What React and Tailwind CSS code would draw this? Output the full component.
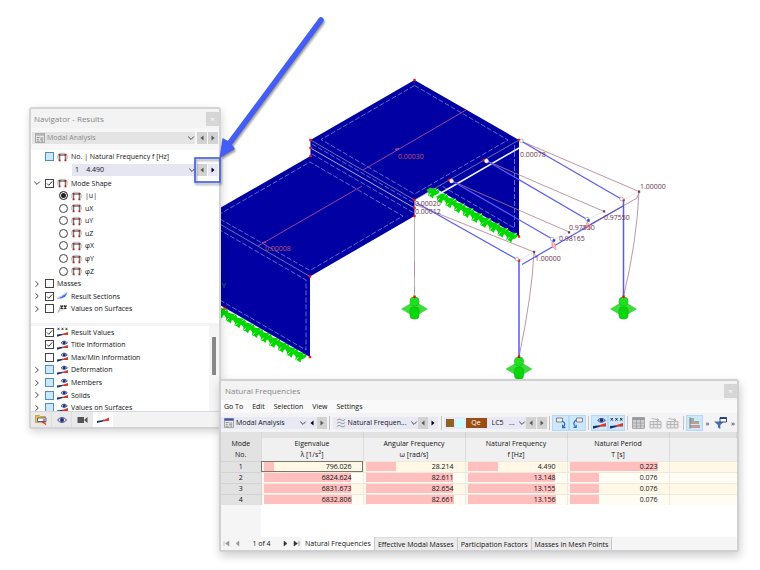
import { useState } from 'react';
import clsx from 'clsx';

const components = ['|u|', 'uX', 'uY', 'uZ', 'φX', 'φY', 'φZ'];

const options = [
  { label: 'Result Values', icon: 'values', checked: true },
  { label: 'Title Information', icon: 'eye', checked: true },
  { label: 'Max/Min Information', icon: 'eye' },
  { label: 'Deformation', icon: 'eye', group: true },
  { label: 'Members', icon: 'eye', group: true },
  { label: 'Solids', icon: 'eye', group: true },
  { label: 'Values on Surfaces', icon: 'eye', group: true }
];

const columns = [
  { name: 'Eigenvalue', unit: <>λ [1/s<sup className="top-0 align-super">2</sup>]</>, max: 6832.806 },
  { name: 'Angular Frequency', unit: 'ω [rad/s]', max: 82.661 },
  { name: 'Natural Frequency', unit: 'f [Hz]', max: 13.156 },
  { name: 'Natural Period', unit: 'T [s]', max: 0.223 }
];

const modes = [
  ['796.026', '28.214', '4.490', '0.223'],
  ['6824.624', '82.611', '13.148', '0.076'],
  ['6831.673', '82.654', '13.155', '0.076'],
  ['6832.806', '82.661', '13.156', '0.076']
];

const tableTabs = ['Natural Frequencies', 'Effective Modal Masses', 'Participation Factors', 'Masses in Mesh Points'];

/* ---------- icons ---------- */

function Chevron({ right }) {
  return (
    <svg viewBox="0 0 8 8" className="size-2 shrink-0" fill="none" stroke="#444" strokeWidth="1">
      <path d={right ? 'M2.5 1.2 5.3 4 2.5 6.8' : 'M1.2 2.6 4 5.4 6.8 2.6'} />
    </svg>
  );
}

function FrameIcon() {
  return (
    <svg viewBox="0 0 11 10" className="h-[10px] w-[11px] shrink-0">
      <path d="M2.500 8.500V3h6v5.500" fill="none" stroke="#777" strokeWidth="1.500" />
      <path d="M.8 7V3.500L2.500 1.300h6l1.700 2.200V7" fill="none" stroke="#999" strokeWidth=".7" />
      <path d="M1.700 2h1.800v1.800H1.700zM7.500 2h1.800v1.800H7.500zM1.700 7.500h1.800v1.800H1.700zM7.500 7.500h1.800v1.800H7.500z" fill="#b81c1c" />
    </svg>
  );
}

function Beam() {
  return (
    <>
      <path d="M0 9.800V7.600l6-.8v1.300z" fill="#1d2f77" />
      <path d="M5 6.900 11 5v3L5 8.100z" fill="#d23a2c" />
    </>
  );
}

function Eye() {
  return (
    <>
      <path d="M4 2.800Q7 -.6 10.400 2.800 7 6 4 2.800z" fill="#dfe4f2" stroke="#27387e" strokeWidth=".8" />
      <circle cx="7.200" cy="2.700" r="1.500" fill="#1d2f77" />
    </>
  );
}

function Crosses() {
  return (
    <path
      d="M.6.800 2.400 3M2.400.800.6 3M4.600.800 6.400 3M6.400.800 4.600 3M8.600.800 10.400 3M10.400.800 8.600 3"
      stroke="#222"
      strokeWidth=".8"
    />
  );
}

function ResultIcon({ kind, large }) {
  return (
    <svg viewBox="0 0 11 10" className={clsx('shrink-0', large ? 'h-[12px] w-[13px]' : 'h-[10px] w-[11px]')}>
      <Beam />
      {kind === 'eye' && <Eye />}
      {kind === 'values' && <Crosses />}
    </svg>
  );
}

function SectionIcon() {
  return (
    <svg viewBox="0 0 11 10" className="h-[10px] w-[11px] shrink-0">
      <path d="M0 7.500 4 6 10.500 1.500 8 6 4 7.500z" fill="#4a68e8" />
      <path d="M0 7.500 10.500 1.500" stroke="#8da0f0" strokeWidth=".6" />
    </svg>
  );
}

function SurfaceIcon() {
  return (
    <svg viewBox="0 0 11 10" className="h-[10px] w-[11px] shrink-0">
      <path d="M1 8.500 3 3.500h6L7.500 6z" fill="#e2e2e2" />
      <path d="M3.500 1.500 6 4.500M6 1.500 3.500 4.500M7 1.500 9.500 4.500M9.500 1.500 7 4.500" stroke="#222" strokeWidth="1.200" />
      <path d="M1 8.500 3 3" stroke="#777" strokeWidth=".6" />
    </svg>
  );
}

function SheetIcon({ dim }) {
  return (
    <svg viewBox="0 0 11 11" className="size-[10px] shrink-0">
      <path d="M.5.500h10v10H.5z" fill="#e9e9e9" stroke="#888" strokeWidth=".8" />
      <path d="M.5.500h10V3H.5z" fill={dim ? '#b4b4b4' : '#3d57a8'} />
      <path d="M2 5h3M2 7h2M2 9h3M6 5.500h3M5.500 7.500h3.500M7 9h2" stroke="#777" strokeWidth=".9" />
    </svg>
  );
}

function WaveIcon() {
  return (
    <svg viewBox="0 0 11 11" className="size-[10px] shrink-0" fill="none" stroke="#8a8a8a" strokeWidth=".9">
      <path d="M1 2.500Q3.500 0 5.500 2t4.500-.5M1 5.800Q3.500 3.500 5.500 5.500T10 5M1 9.200Q3.500 7 5.500 9t4.500-.5" />
    </svg>
  );
}

/* ---------- small controls ---------- */

function Check({ checked, blue, label, children }) {
  return (
    <label className="flex items-center gap-[3px]">
      <span className="grid size-[9px] shrink-0 place-items-center">
        <input
          type="checkbox"
          aria-label={label}
          defaultChecked={checked}
          className={clsx(
            'peer size-[9px] appearance-none border [grid-area:1/1]',
            blue ? 'border-[#4f8fc0] bg-[#cce6fb]' : 'border-[#444] bg-white'
          )}
        />
        <svg viewBox="0 0 9 9" className="invisible size-[9px] [grid-area:1/1] peer-checked:visible">
          <path d="M2 4.500 3.800 6.300 7.200 2.400" fill="none" stroke="#222" strokeWidth=".9" />
        </svg>
      </span>
      {children}
    </label>
  );
}

function Step({ next, plain, dim, label }) {
  return (
    <button
      aria-label={label}
      className={clsx('grid h-3 w-[10px] shrink-0 place-items-center', plain ? 'bg-[#e9e9f5]' : 'bg-[#d2d2d2]')}
    >
      <svg viewBox="0 0 6 6" className="size-[6px]" fill={dim ? '#555' : '#000'}>
        <path d={next ? 'M1.500.500 4.500 3 1.500 5.500z' : 'M4.500.500 1.500 3 4.500 5.500z'} />
      </svg>
    </button>
  );
}

function Combo({ icon, value, label, className }) {
  return (
    <div className={clsx('flex h-3 items-center gap-[2px] pl-[3px]', className)}>
      {icon}
      <select aria-label={label} className="h-3 min-w-0 flex-1 appearance-none bg-transparent leading-3">
        <option>{value}</option>
      </select>
      <Chevron />
    </div>
  );
}

function Divider() {
  return <span className="mx-[2px] h-[14px] w-px shrink-0 bg-[#c4c4c4]" />;
}

function Close() {
  return (
    <button aria-label="Close" className="grid h-[14px] w-[13px] place-items-center bg-[#d6d6d6] text-[8px] leading-none text-white">
      ×
    </button>
  );
}

function TreeRow({ open, group, children }) {
  return (
    <li className="flex items-center gap-[3px]">
      <span className="flex w-[11px] justify-center">{group && <Chevron right={!open} />}</span>
      {children}
    </li>
  );
}

/* ---------- navigator ---------- */

function Navigator() {
  const [component, setComponent] = useState('|u|');

  return (
    <section className="absolute top-[107px] left-[29px] w-[192px] rounded-[3px] border-2 border-[#d3d3d8] bg-[#f3f3f3] shadow-[1px_3px_8px_rgba(0,0,0,0.16)]">
      <header className="flex h-[19px] items-center justify-between pl-[3px] text-[8px] text-[#858585]">
        <h2>Navigator - Results</h2>
        <Close />
      </header>
      <div className="flex h-[22px] items-center gap-px bg-[#f7f7f7] px-px pb-[3px]">
        <Combo label="Analysis" value="Modal Analysis" icon={<SheetIcon dim />} className="mr-px flex-1 bg-[#e4e4e4] text-[#8a8a8a]" />
        <Step label="Previous analysis" dim />
        <Step label="Next analysis" next dim />
      </div>

      <div className="h-[173px] bg-white">
        <div className="flex h-[13px] items-center pl-[14px]">
          <Check blue label="Show natural frequency">
            <FrameIcon />
            No. | Natural Frequency f [Hz]
          </Check>
        </div>
        <div className="flex h-[14px] items-center gap-px pr-px pl-[41px]">
          <Combo label="Mode" value={'1\u00a0\u00a0\u00a0\u00a04.490'} className="flex-1 bg-[#e6e6f3]" />
          <Step label="Previous mode" dim />
          <Step label="Next mode" next plain />
        </div>
        <ul className="grid h-[138px] auto-rows-fr">
          <TreeRow group open>
            <Check checked><FrameIcon />Mode Shape</Check>
          </TreeRow>
          {components.map(name => (
            <li key={name} className="flex items-center pl-[28px]">
              <label className="flex items-center gap-[3px]">
                <input
                  type="radio"
                  name="component"
                  checked={component === name}
                  onChange={() => setComponent(name)}
                  className="size-[9px] appearance-none rounded-full border border-[#444] checked:bg-[#222] checked:shadow-[inset_0_0_0_1px_white]"
                />
                <FrameIcon />
                {name}
              </label>
            </li>
          ))}
          <TreeRow group><Check>Masses</Check></TreeRow>
          <TreeRow group><Check checked><SectionIcon />Result Sections</Check></TreeRow>
          <TreeRow group><Check><SurfaceIcon />Values on Surfaces</Check></TreeRow>
        </ul>
      </div>

      <div className="mt-[3px] flex h-[85px] justify-between overflow-hidden bg-white">
        <ul className="grid h-[88px] auto-rows-fr">
          {options.map(option => (
            <TreeRow key={option.label} group={option.group}>
              <Check checked={option.checked} blue={option.group}>
                <ResultIcon kind={option.icon} />
                {option.label}
              </Check>
            </TreeRow>
          ))}
        </ul>
        <div className="w-[10px] bg-[#f5f5f5] px-[3px] pt-[11px]">
          <div className="h-[38px] bg-[#888]" />
        </div>
      </div>

      <nav className="flex h-[16px] border-t border-[#d8d8e2]">
        <button aria-label="Data" className="grid w-[21px] place-items-center border-r border-[#ddd] bg-[#e9e9e9]">
          <svg viewBox="0 0 12 11" className="h-[11px] w-[12px]">
            <path d="M.5 1.500h4l1 1h5v6H.5z" fill="#f5bd38" stroke="#b98a1d" strokeWidth=".6" />
            <path d="M2.500 4h8.500v3.500H2.500z" fill="#fff" stroke="#3558b5" strokeWidth=".9" />
            <path d="M7 7.500 11 10.500M9 5v3" stroke="#c33" strokeWidth="1.300" />
          </svg>
        </button>
        <button aria-label="Display" className="grid w-[20px] place-items-center border-r border-[#ddd] bg-[#e9e9e9]">
          <svg viewBox="0 0 10 8" className="h-[8px] w-[10px]">
            <path d="M.5 4Q5-1 9.500 4 5 9 .5 4z" fill="#e6e9f5" stroke="#27387e" strokeWidth=".9" />
            <circle cx="5" cy="4" r="2" fill="#1d2f77" />
          </svg>
        </button>
        <button aria-label="Views" className="grid w-[21px] place-items-center bg-[#e9e9e9]">
          <svg viewBox="0 0 11 8" className="h-[8px] w-[11px]" fill="#555">
            <path d="M.5 1h6.500v6H.5zM7.500 3.500 10.500 1v6l-3-2.500z" />
          </svg>
        </button>
        <button aria-label="Results" className="grid w-[20px] place-items-center bg-white">
          <svg viewBox="0 0 12 8" className="h-[8px] w-[12px]">
            <path d="M0 7V5l6-1v1.500z" fill="#1d2f77" />
            <path d="M6 3.500h2l4-2v3.200L6 5.500z" fill="#d23a2c" />
          </svg>
        </button>
      </nav>
    </section>
  );
}

/* ---------- table window ---------- */

function Tool({ label, active, children }) {
  return (
    <button
      aria-label={label}
      className={clsx('grid h-[16px] w-[17px] shrink-0 place-items-center', active && 'border border-[#b5d8f3] bg-[#cde8fd]')}
    >
      {children}
    </button>
  );
}

function LinkIcon({ flip }) {
  return (
    <svg viewBox="0 0 12 12" className="size-3" fill="none">
      <path d={flip ? 'M4.500 1h6v4h-6z' : 'M1.500 1h6v4h-6z'} fill="#eee" stroke="#777" strokeWidth=".9" />
      <path
        d={flip ? 'M4 3Q0 6 3.500 10.500M1.500 10.500h2.700V7.800' : 'M7 4Q12 6 8 10.500M7.600 7.800v2.900h2.800'}
        stroke="#2b6fb3"
        strokeWidth="1.200"
      />
    </svg>
  );
}

function ExportIcon() {
  return (
    <svg viewBox="0 0 13 12" className="h-3 w-[13px]" fill="none" stroke="#b0b0b0" strokeWidth=".9">
      <path d="M1 4.500h11V11H1zM1 7.500h11M4.700 4.500V11M8.300 4.500V11" fill="#e8e8e8" />
      <path d="M2.500 1.500 9.500 2.800M8 1.300l2 1.600-2 .8" />
    </svg>
  );
}

function Toolbar() {
  return (
    <div className="flex h-[19px] items-center bg-[#f3f3f6]">
      <Combo label="Analysis" value="Modal Analysis" icon={<SheetIcon />} className="w-[86px] bg-[#e9e9f5]" />
      <Step label="Previous analysis" plain />
      <Step label="Next analysis" next dim />
      <Divider />
      <span className="w-px" />
      <Combo label="Result table" value="Natural Frequen..." icon={<WaveIcon />} className="w-[85px] bg-[#e9e9f5]" />
      <Step label="Previous table" dim />
      <Step label="Next table" next plain />
      <span className="w-px" />
      <Divider />
      <div className="flex h-3 w-[83px] items-center gap-[2px] bg-[#e9e9f5] pl-[2px]">
        <span className="size-2 bg-[#8e6021]" />
        <span className="size-2 bg-[#ccffff]" />
        <span className="h-[10px] w-[21px] bg-[#994f14] text-center leading-[10px] text-white">Qe</span>
        <Combo label="Load case" value={'LC5\u00a0\u00a0\u00a0...'} className="min-w-0 flex-1" />
      </div>
      <span className="flex gap-px">
        <Step label="Previous load case" dim />
        <Step label="Next load case" next dim />
      </span>
      <Divider />
      <Tool label="Select in model" active><LinkIcon /></Tool>
      <Tool label="Select in table" active><LinkIcon flip /></Tool>
      <Divider />
      <Tool label="Show results" active><ResultIcon kind="eye" large /></Tool>
      <Tool label="Show values" active><ResultIcon kind="values" large /></Tool>
      <Divider />
      <Tool label="Table layout">
        <svg viewBox="0 0 13 12" className="h-3 w-[13px]">
          <path d="M.5.500h12v11H.5z" fill="#d0d0d0" stroke="#aaa" />
          <path d="M.5.500h12V3H.5z" fill="#999" />
          <path d="M.5 6h12M.5 9h12M4.500 3v8.500M8.500 3v8.500" stroke="#999" strokeWidth=".7" />
        </svg>
      </Tool>
      <Tool label="Export"><ExportIcon /></Tool>
      <Tool label="Import"><ExportIcon /></Tool>
      <Divider />
      <Tool label="Relation bars" active>
        <svg viewBox="0 0 12 12" className="size-3">
          <path d="M1 1h4v3h5v3H1z" fill="#86b898" />
          <path d="M1 4.500h7V7H1zM1 8h10v3H1z" fill="#c69a9a" />
          <path d="M1 .5v11" stroke="#7b7b7b" />
        </svg>
      </Tool>
      <button aria-label="More tools" className="w-[9px] text-center text-[8px]">»</button>
      <Tool label="Filter">
        <svg viewBox="0 0 13 12" className="h-3 w-[13px]">
          <path d="M0 4.500h10L6.300 8v4L4 10.500V8z" fill="#3f6fad" />
          <path d="M6 .5h6.500v4.500H6z" fill="#fff" stroke="#27387e" strokeWidth=".9" />
          <path d="M6 .5h6.500V2H6z" fill="#27387e" />
        </svg>
      </Tool>
      <button aria-label="More filters" className="w-[8px] text-center text-[8px]">»</button>
    </div>
  );
}

function FrequencyTable() {
  return (
    <table className="w-full table-fixed border-collapse">
      <colgroup>
        <col className="w-[40px]" />
        <col className="w-[102px]" />
        <col className="w-[102px]" />
        <col className="w-[102px]" />
        <col className="w-[102px]" />
        <col />
      </colgroup>
      <thead className="bg-[#f0f0f0]">
        <tr className="h-[6px] bg-[#e2e2e2]">
          {[0, 1, 2, 3, 4, 5].map(i => <td key={i} className="border-r border-[#d3d3d3] p-0" />)}
        </tr>
        <tr className="h-[23px] leading-[11px]">
          <th className="border-r border-[#dcdcdc] bg-[#e2e2e2] p-0 font-normal">Mode<br />No.</th>
          {columns.map(column => (
            <th key={column.name} className="border-r border-[#dcdcdc] p-0 font-normal">
              {column.name}<br />{column.unit}
            </th>
          ))}
          <td className="p-0" />
        </tr>
      </thead>
      <tbody>
        {modes.map((values, row) => (
          <tr key={row} className={clsx('h-[11px]', row % 2 ? 'bg-[#fffdf3]' : 'bg-[#fff8e6]')}>
            <th className="border-t border-r border-[#d3d3d3] bg-[#e2e2e2] p-0 leading-[10px] font-normal">{row + 1}</th>
            {values.map((value, i) => (
              <td
                key={i}
                className={clsx(
                  'border-t border-r border-[#eee8e0] p-0',
                  row === 0 && i === 0 && 'outline outline-offset-[-1px] outline-[#77776a]'
                )}
              >
                <div className="ml-[2px] grid w-[88px] leading-[10px]">
                  <span
                    className="h-[9px] bg-[#ffbfbf] [grid-area:1/1]"
                    style={{ width: `${(Number(value) / columns[i].max) * 100}%` }}
                  />
                  <span className="text-right [grid-area:1/1]">{value}</span>
                </div>
              </td>
            ))}
            <td className="border-t border-[#eee8e0] p-0" />
          </tr>
        ))}
      </tbody>
    </table>
  );
}

function PageButton({ label, d, dim }) {
  return (
    <button aria-label={label} className="grid w-[11px] place-items-center">
      <svg viewBox="0 0 7 7" className="size-[7px]" fill={dim ? '#999' : '#333'} stroke={dim ? '#999' : '#333'} strokeWidth=".5">
        <path d={d} />
      </svg>
    </button>
  );
}

function FrequenciesWindow() {
  return (
    <section className="absolute top-[379px] left-[219px] w-[520px] rounded-[3px] border-2 border-[#d0d0d3] bg-[#f3f3f3] shadow-[1px_4px_10px_rgba(0,0,0,0.2)]">
      <header className="flex h-[19px] items-center justify-between pl-[4px] text-[8px] text-[#858585]">
        <h2>Natural Frequencies</h2>
        <Close />
      </header>
      <nav className="flex h-[13px] items-center gap-[9px] bg-[#f9f9f9] pl-[3px]">
        {['Go To', 'Edit', 'Selection', 'View', 'Settings'].map(item => <button key={item}>{item}</button>)}
      </nav>
      <Toolbar />
      <div className="flex h-[105px] flex-col bg-white">
        <FrequencyTable />
        <div className="w-[40px] flex-1 bg-[#f5f5f5]" />
      </div>
      <footer className="flex h-[13px] bg-[#f5f5f6]">
        <PageButton label="First" dim d="M1 1v5M6 1 2.500 3.500 6 6z" />
        <PageButton label="Previous" dim d="M5 1 2 3.500 5 6z" />
        <span className="w-[37px] text-center leading-[13px]">1 of 4</span>
        <PageButton label="Next" d="M2 1 5 3.500 2 6z" />
        <PageButton label="Last" d="M1 1l3.500 2.500L1 6zM6 1v5" />
        {tableTabs.map((tab, i) => (
          <button
            key={tab}
            className={clsx('border-r border-[#c8c8d0] px-[3px]', i === 0 ? 'bg-white' : 'border-t border-t-[#dcdcdc] bg-[#ebebeb]')}
          >
            {tab}
          </button>
        ))}
      </footer>
    </section>
  );
}

/* ---------- model ---------- */

function Support({ x, y }) {
  return (
    <g transform={`translate(${x} ${y})`}>
      <path d="M-13.500 12 0 4 13.500 12 0 20z" fill="#3ddb3d" />
      <rect x="-4.500" y="0" width="9" height="9" rx="4" fill="#1fe01f" stroke="#14b814" strokeWidth=".6" />
      <rect x="-4.500" y="10" width="9" height="12" rx="3.500" fill="#08d808" stroke="#0fb00f" strokeWidth=".6" />
      <rect x="-1.200" y="-1.500" width="2.400" height="2.400" fill="red" />
    </g>
  );
}

// line support: a chain of overlapping spring symbols
function SupportChain({ x, y, count }) {
  return Array.from({ length: count }, (_, i) => (
    <g key={i} transform={`translate(${x + i * 8.7} ${y + i * 4.9})`}>
      <path d="M-6.500-2-3-4.500 1-3.500 5-3 6.500 0 4 2.500 1 3.500 0 6.500-2.500 4.500-5 4-4.500 1z" fill="#00d800" />
      <path d="M-4.500 4-2 1.200M3-1.200 5.500-3" stroke="#fff" strokeWidth=".8" />
    </g>
  ));
}

function Model() {
  const nodes = [
    [414.5, 80], [519, 140], [310.5, 140], [310.5, 148], [310.5, 156], [414.5, 200], [414.5, 208], [414.5, 216],
    [310, 276.5], [310, 357], [519, 236.5], [484, 160], [449, 180], [623.5, 200], [519, 260.5]
  ];
  const rings = [[521.5, 141], [621.5, 199], [587, 219], [552, 239], [517, 259]];
  const values = [
    ['0.00030', 398, 159], ['0.00008', 265, 251], ['0.00020', 415, 206], ['0.00012', 415, 214], ['0.00078', 520, 157],
    ['1.00000', 640, 189], ['0.97550', 604, 220], ['0.97550', 569, 230], ['0.98165', 559, 241], ['1.00000', 535, 261]
  ];

  return (
    <svg viewBox="0 0 760 570" className="block w-full">
      <SupportChain x={222} y={312} count={10} />
      <path d="M414.500 80 519 140V236.500L435 188 414.500 200V216L310 276.500V357L206 297V216L310.500 156V140z" fill="#0000a3" />
      <SupportChain x={433} y={192} count={10} />

      <g fill="none" stroke="#7f86d2" strokeWidth=".8" strokeDasharray="5 2">
        <path d="M414.500 85.500 508 140 414.500 194 321 139.500z" />
        <path d="M312 144 414 203M312 154 414 213" />
        <path d="M206 222 310 162 403 216 310 270.500 206 211" />
        <path d="M206 222 306 280V350L206 292" />
        <path d="M514.500 145V228L440 185" />
      </g>
      <g fill="none" stroke="#858bb0" strokeWidth=".8">
        <path d="M310.500 140 414.500 200 519 140M206 216 310 276.500" />
        <path d="M310.500 148 414.500 208" stroke="#d5d5ee" />
      </g>
      <path d="M434 197 519 148" stroke="#f4f4ff" strokeWidth="1.600" />
      <path d="M466 110 363 170M362 186 258 246" stroke="#a0409a" strokeWidth="1" />
      <path d="M395 149.500 399 148.500M262 243 266 242" stroke="#a0409a" strokeWidth="1.800" />

      {/* deformed shape */}
      <g fill="none" stroke="#ad7c90" strokeWidth=".8">
        <path d="M521 141 639 191.500M487 161 604 211.500M452 181 569 232M414 204 534 252" />
        <path d="M639 191.500Q637 240 623.500 297M534 252Q532 295 519 357M534 252 536 258M639 192 637 198 623 206" />
      </g>
      <path d="M519 260.500 534 252M552 240 569 232M587 220 604 211.500M622 200 639 191.500" stroke="#ddd" strokeWidth=".8" />
      <path d="M414.500 217V297" stroke="#b4b4b4" />
      <path d="M414.500 262V277M414.500 287V293" stroke="#b77" strokeWidth=".6" />

      <g fill="none" stroke="#5a5af2" strokeWidth="1.200">
        <path d="M521 141 623 200M487 161 588 220M452 181 554 240M417 203 519 260.500" />
        <path d="M522 264.500 623 206" />
        <path d="M519 261V357M623.500 200V297" strokeWidth="1.500" />
      </g>
      <path d="M582 229 623 206" stroke="#704a90" strokeWidth=".8" />
      <path d="M552 241 555 244 556 250 552 246zM587 222 590 225 590 230 586 226z" fill="#ffc3c3" stroke="#f08080" strokeWidth=".7" />

      <Support x={414.5} y={297} />
      <Support x={623.5} y={297} />
      <Support x={519} y={357} />

      {nodes.map(([x, y]) => <rect key={`${x}-${y}`} x={x - 1.2} y={y - 1.2} width="2.4" height="2.4" fill="#ff1010" />)}
      {rings.map(([x, y]) => <circle key={x} cx={x} cy={y} r="1.800" fill="#fff" stroke="#999" strokeWidth=".7" />)}
      <g fill="#fff" stroke="#ddd" strokeWidth=".4">
        <circle cx="486.500" cy="161" r="2" />
        <circle cx="451.500" cy="181" r="2" />
      </g>
      <path d="M587.300 219.300h2.400v2.400h-2.400zM552.800 239.300h2.400v2.400h-2.400z" fill="#1040f0" />
      <path d="M638 190.500h2.200v2.200H638zM603 210.300h2.200v2.200H603zM568 231.200h2.200v2.200H568zM533 250.700h2.200v2.200H533z" fill="#7a3a55" />

      <g fontSize="7" fill="#6b2f4a">
        {values.map(([value, x, y], i) => (
          <text key={i} x={x} y={y} fill={i < 2 ? '#c0586c' : undefined}>{value}</text>
        ))}
        <text x="222" y="288" fill="#0fb04f">Y</text>
      </g>
      <path d="M223 306.500 226 309.500M226 306.500 223 309.500" stroke="red" />
    </svg>
  );
}

// pointer to the mode stepper in the navigator
function Callout() {
  return (
    <svg viewBox="190 10 140 180" className="pointer-events-none absolute top-[10px] left-[190px] h-[180px] w-[140px] drop-shadow-[1px_2px_1px_rgba(0,0,0,0.4)]">
      <path d="M321 20 229 144" stroke="#435df5" strokeWidth="5.500" strokeLinecap="round" />
      <path d="M219.500 158 222.500 138 228 141 233 146 235 149z" fill="#435df5" />
      <rect x="195" y="158" width="25" height="24" fill="none" stroke="#3f5ce8" strokeWidth="1.600" />
    </svg>
  );
}

export default function App() {
  return (
    <main className="relative min-h-screen overflow-hidden bg-white font-['Open_Sans','Noto_Sans',sans-serif] text-[7px] leading-none text-[#111]">
      <Model />
      <Navigator />
      <FrequenciesWindow />
      <Callout />
    </main>
  );
}
